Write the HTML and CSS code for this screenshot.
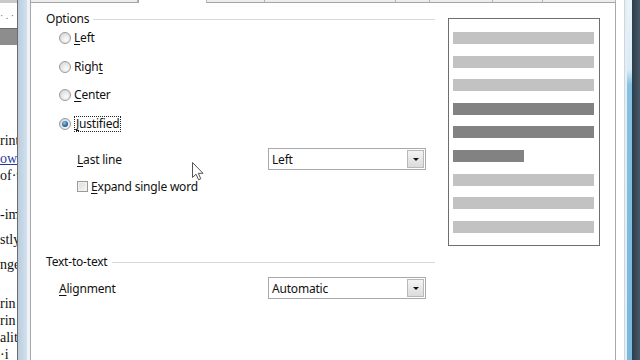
FILE: index.html
```html
<!DOCTYPE html>
<html lang="en">
<head>
  <meta charset="UTF-8" />
  <title>Paragraph - Alignment</title>
  <link rel="stylesheet" href="styles.css">
</head>
<body>
  <div class="screen">
    <!-- document behind the dialog -->
    <div class="doc">
      <div class="doc-top"></div>
      <div class="doc-ruler">· . ·</div>
      <div class="doc-band"></div>
      <p class="first">rint</p>
      <p class="link gap-s">owi</p>
      <p>of·tw</p>
      <p class="gap-l">-im</p>
      <p class="gap-m">stly</p>
      <p class="gap-m">nge</p>
      <p class="gap-l">rin</p>
      <p>rin</p>
      <p>alit</p>
      <p>·i</p>
    </div>
    <div class="frame-left"></div>

    <div class="dialog">
      <div class="tabs">
        <span class="tab t1"></span>
        <span class="tab active t2"></span>
        <span class="tab t3"></span>
        <span class="tab t4"></span>
        <span class="tab t5"></span>
        <span class="tab t6"></span>
        <span class="tab t7"></span>
        <span class="tab t8"></span>
      </div>

      <div class="page">
        <div class="settings">
          <div class="legend"><span>Options</span></div>
          <div class="radios">
            <label class="radio"><span class="dot"></span><span><u>L</u>eft</span></label>
            <label class="radio"><span class="dot"></span><span>Righ<u>t</u></span></label>
            <label class="radio"><span class="dot"></span><span><u>C</u>enter</span></label>
            <label class="radio checked"><span class="dot"></span><span class="focus"><u>J</u>ustified</span></label>
          </div>

          <div class="field sub">
            <span class="field-label"><u>L</u>ast line</span>
            <div class="listbox"><span>Left</span><span class="drop"></span></div>
          </div>
          <label class="check"><span class="box"></span><span><u>E</u>xpand single word</span></label>

          <div class="legend second"><span>Text-to-text</span></div>
          <div class="field">
            <span class="field-label"><u>A</u>lignment</span>
            <div class="listbox"><span>Automatic</span><span class="drop"></span></div>
          </div>
        </div>

        <div class="preview">
          <div class="bar"></div>
          <div class="bar"></div>
          <div class="bar"></div>
          <div class="bar dark"></div>
          <div class="bar dark"></div>
          <div class="bar dark short"></div>
          <div class="bar"></div>
          <div class="bar"></div>
          <div class="bar"></div>
        </div>
      </div>
    </div>

    <div class="frame-right"><span class="edge"></span><span class="glass"></span><span class="shade"></span></div>
  </div>

  <!-- mouse pointer -->
  <svg class="cursor" width="13" height="19" viewBox="0 0 13 19">
    <path d="M0.5 0.5 L0.5 15.5 L4 12.2 L6.6 17.8 L8.8 16.8 L6.3 11.3 L11 11.3 Z" fill="#fff" stroke="#555" stroke-width="1" stroke-linejoin="round"/>
  </svg>
</body>
</html>
```

FILE: styles.css
```css
html, body {
  margin: 0;
  padding: 0;
  height: 100%;
  background: #fff;
  font-family: "Noto Sans", "Open Sans", sans-serif;
  font-size: 12px;
  letter-spacing: -0.2px;
  color: #111;
}
*, *::before, *::after {
  box-sizing: border-box;
}

.screen {
  display: flex;
  height: 360px;
  overflow: hidden;
}

/* 
  Strip of the Writer document peeking out
  on the left of the dialog.
*/
.doc {
  width: 17px;
  overflow: hidden;
  background: #fff;
  font-family: "Liberation Serif", serif;
  font-size: 14px;
  letter-spacing: 0;
}
.doc-top {
  height: 3px;
  background: #c9c9c9;
}
.doc-ruler {
  height: 22px;
  padding-top: 8px;
  font-size: 10px;
  line-height: 10px;
  color: #666;
  white-space: nowrap;
}
.doc-band {
  height: 17px;
  margin-top: 3px;
  background: #8d8d8d;
  border-top: 1px solid #6a6a6a;
}
.doc p {
  margin: 0;
  height: 17px;
  line-height: 17px;
  white-space: nowrap;
  color: #111;
}
.doc p.first { margin-top: 87px; }
.doc p.link { color: #2a3a9c; text-decoration: underline; }
.doc .gap-s { margin-top: 1px; }
.doc .gap-m { margin-top: 8px; }
.doc .gap-l { margin-top: 22px; }

/* window frames (Aero glass) */
.frame-left {
  width: 13px;
  border-left: 1px solid #6d6d6d;
  border-right: 3px solid #eef2f6;
  background: linear-gradient(to right, #b9cde0, #d3e0ec);
}
.frame-right {
  width: 24px;
  display: flex;
}
.frame-right .edge {
  width: 9px;
  border-right: 1px solid #d2d6da;
  background: #fff;
}
.frame-right .glass {
  width: 7px;
  border-left: 2px solid #e4eef6;
  background: linear-gradient(to bottom, #eaf3f9 0, #d8ebf5 70px, #84c1e2 85px, #79b9dc 100%);
}
.frame-right .shade {
  flex: 1;
  background: linear-gradient(to right, #2e3d4b, #465767);
}

/* dialog */
.dialog {
  flex: 1;
  display: flex;
  flex-direction: column;
  background: #fff;
}
.tabs {
  display: flex;
  height: 3px;
}
.tab {
  display: block;
  height: 3px;
  background: #ededed;
  border-bottom: 1px solid #a5a5a5;
  border-right: 1px solid #b4b4b4;
}
.tab.active {
  background: #fff;
  border-bottom: none;
  border-left: 1px solid #a5a5a5;
}
.t1 { width: 108px; border-left: 1px solid #a5a5a5; }
.t2 { width: 69px; }
.t3 { width: 58px; }
.t4 { width: 131px; }
.t5 { width: 34px; }
.t6 { width: 63px; }
.t7 { width: 50px; }
.t8 { flex: 1; }

.page {
  flex: 1;
  display: flex;
  align-items: flex-start;
  gap: 13px;
  padding: 8px 15px 0 15px;
  border-left: 1px solid #a9a9a9;
  border-right: 1px solid #a9a9a9;
}

.settings {
  width: 389px;
  display: flex;
  flex-direction: column;
}

.legend {
  display: flex;
  align-items: center;
  height: 16px;
  line-height: 16px;
}
.legend::after {
  content: "";
  flex: 1;
  margin-left: 4px;
  border-top: 1px solid #d4d9de;
}
.legend.second {
  margin-top: 60px;
}

u {
  text-decoration: underline;
  text-underline-offset: 2px;
}

.radios {
  display: flex;
  flex-direction: column;
  gap: 12.7px;
  margin-top: 3px;
  padding-left: 13px;
}
.radio {
  display: flex;
  align-items: center;
  height: 16px;
  line-height: 16px;
  gap: 3px;
}
.dot {
  width: 12px;
  height: 12px;
  border-radius: 50%;
  border: 1px solid #9a9a9a;
  background: radial-gradient(circle at 60% 65%, #fcfcfc 0, #e3e3e3 55%, #cfcfcf 100%);
  display: flex;
  align-items: center;
  justify-content: center;
}
.radio.checked .dot::after {
  content: "";
  width: 6px;
  height: 6px;
  border-radius: 50%;
  background: radial-gradient(circle at 40% 35%, #8cc8f0 0, #2a6aa8 55%, #16345a 100%);
}
.focus {
  border: 1px dotted #222;
  padding: 0 1px;
  line-height: 14px;
}

.field {
  display: flex;
  align-items: center;
  height: 22px;
  margin-top: 7px;
  padding-left: 13px;
}
.field.sub {
  margin-top: 16px;
  padding-left: 31px;
}
.field-label {
  flex: 1;
}
.listbox {
  width: 158px;
  height: 22px;
  margin-right: 9px;
  display: flex;
  align-items: center;
  justify-content: space-between;
  padding: 1px 1px 1px 3px;
  border: 1px solid #a9a9a9;
  background: #fff;
}
.drop {
  width: 17px;
  height: 18px;
  border: 1px solid #b9b9b9;
  background: linear-gradient(to bottom, #f4f4f4, #dcdcdc);
  display: flex;
  align-items: center;
  justify-content: center;
}
.drop::after {
  content: "";
  border-left: 3px solid transparent;
  border-right: 3px solid transparent;
  border-top: 3px solid #111;
}

.check {
  display: flex;
  align-items: center;
  gap: 3px;
  height: 16px;
  margin-top: 8px;
  padding-left: 31px;
}
.box {
  width: 11px;
  height: 11px;
  border: 1px solid #9a9a9a;
  background: linear-gradient(135deg, #dcdcdc, #f7f7f7);
  box-shadow: inset 0 0 0 1px #f2f2f2;
}

/* alignment preview */
.preview {
  width: 152px;
  height: 228px;
  margin-top: 7px;
  padding: 13px 0 0 4px;
  border: 1px solid #6e6e6e;
  display: flex;
  flex-direction: column;
  gap: 11.6px;
}
.bar {
  width: 141px;
  height: 12px;
  background: #c2c2c2;
}
.bar.dark { background: #828282; }
.bar.short { width: 71px; }

.cursor {
  position: absolute;
  left: 192px;
  top: 162px;
}
```
